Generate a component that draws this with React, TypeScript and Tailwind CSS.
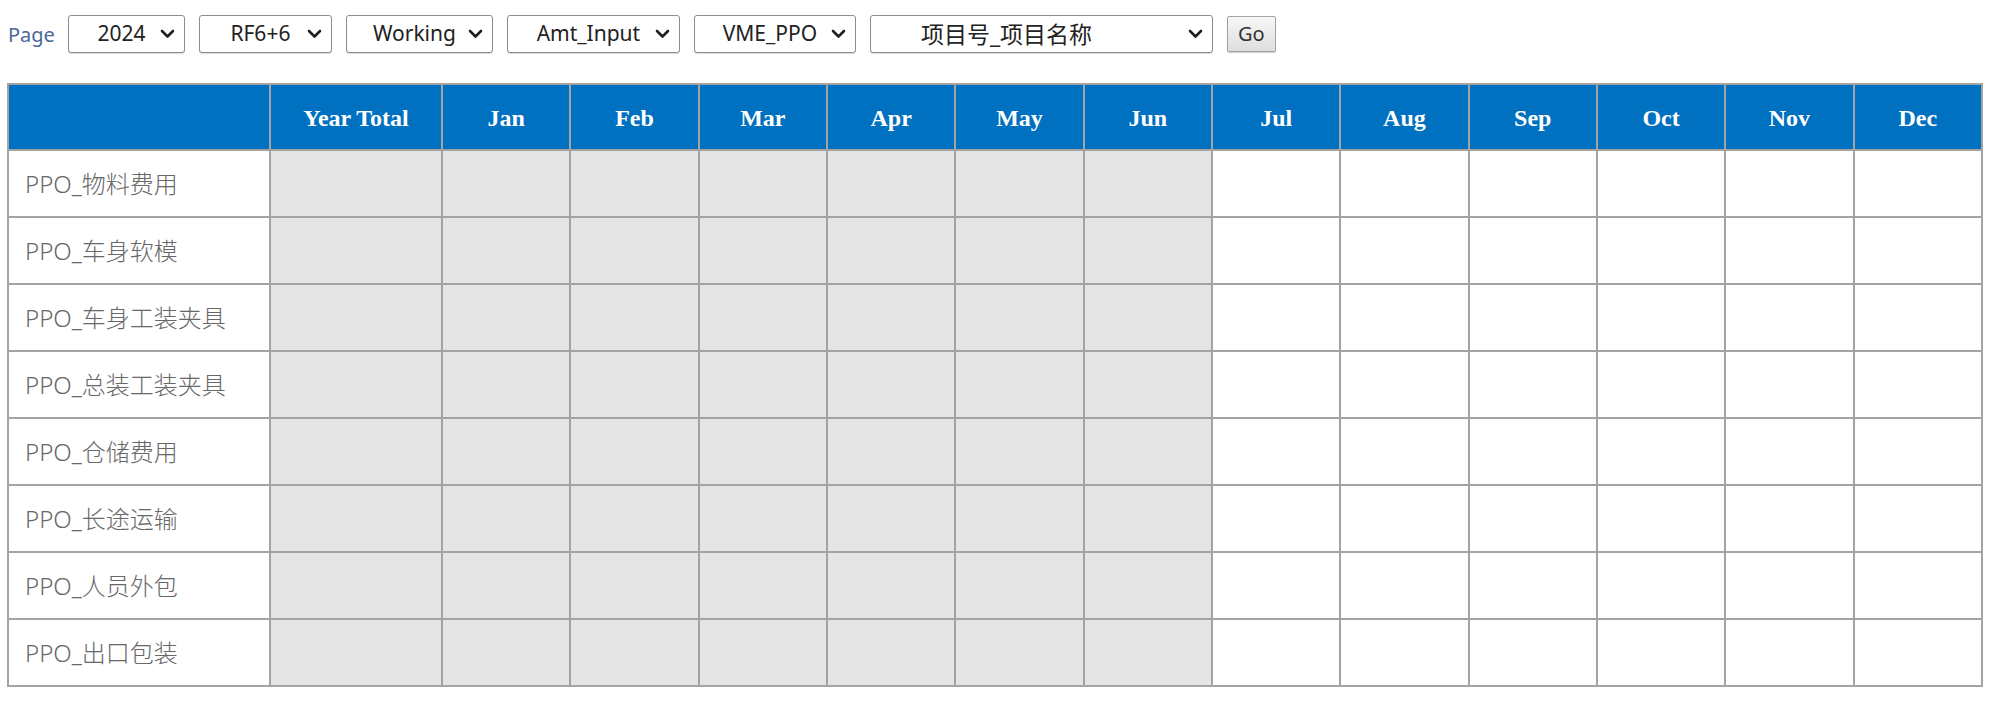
import React from "react";

const months = ["Jan","Feb","Mar","Apr","May","Jun","Jul","Aug","Sep","Oct","Nov","Dec"];
const labels = [
  "PPO_物料费用",
  "PPO_车身软模",
  "PPO_车身工装夹具",
  "PPO_总装工装夹具",
  "PPO_仓储费用",
  "PPO_长途运输",
  "PPO_人员外包",
  "PPO_出口包装",
];

function Chevron() {
  return (
    <svg width="15" height="10" viewBox="0 0 15 10" className="shrink-0">
      <polyline points="2,2 7.5,7.5 13,2" fill="none" stroke="#1f1f1f" strokeWidth="2.6" strokeLinecap="round" strokeLinejoin="round" />
    </svg>
  );
}

function FakeSelect({ text, w, left }: { text: string; w: string; left?: boolean }) {
  return (
    <div className={`${w} h-[38px] flex items-center border border-[#8c8c8c] rounded-[3px] bg-white shadow-[0_1px_1px_rgba(0,0,0,0.15)] pr-[9px] ${left ? "pl-[50px]" : "pl-[20px]"}`}>
      {left ? (
        <span className="flex-1 text-left text-[23px] text-[#222]">{text}</span>
      ) : (
        <span className="flex-1 text-center text-[21px] text-[#222] pr-[6px] whitespace-nowrap">{text}</span>
      )}
      <Chevron />
    </div>
  );
}

export default function App() {
  return (
    <div className="bg-white w-[1999px] h-[710px] pt-[15px] font-['Noto_Sans','Noto_Sans_CJK_SC',sans-serif]">
      <div className="flex items-center h-[38px] pl-[8px]">
        <span className="text-[20px] text-[#4a6a9a] mr-[13px] mt-[2px]">Page</span>
        <div className="flex items-center gap-[14px]">
          <FakeSelect text="2024" w="w-[117px]" />
          <FakeSelect text="RF6+6" w="w-[133px]" />
          <FakeSelect text="Working" w="w-[147px]" />
          <FakeSelect text="Amt_Input" w="w-[173px]" />
          <FakeSelect text="VME_PPO" w="w-[162px]" />
          <FakeSelect text="项目号_项目名称" w="w-[343px]" left />
          <button className="w-[49px] h-[36px] border border-[#a3a3a3] rounded-[2px] bg-gradient-to-b from-[#f7f7f7] to-[#dedede] text-[20px] text-[#333] leading-none shadow-[0_1px_1px_rgba(0,0,0,0.2)]">
            Go
          </button>
        </div>
      </div>
      <table className="table-fixed border-collapse ml-[7px] mt-[30px] w-[1976px]">
        <colgroup>
          <col className="w-[262px]" />
          <col className="w-[172px]" />
          {months.map((m) => (
            <col key={m} />
          ))}
        </colgroup>
        <thead>
          <tr className="h-[66px]">
            <th className="bg-[#0070c0] border-2 border-[#a3a3a3]"></th>
            <th className="bg-[#0070c0] border-2 border-[#a3a3a3] text-white font-bold text-[24px] font-['Liberation_Serif',serif] pt-[2px]">Year Total</th>
            {months.map((m) => (
              <th key={m} className="bg-[#0070c0] border-2 border-[#a3a3a3] text-white font-bold text-[24px] font-['Liberation_Serif',serif] pt-[2px]">{m}</th>
            ))}
          </tr>
        </thead>
        <tbody>
          {labels.map((l) => (
            <tr key={l} className="h-[67px]">
              <td className="border-2 border-[#a3a3a3] pl-[16px] text-[24px] font-light text-[#686868] whitespace-nowrap">{l}</td>
              {Array.from({ length: 13 }).map((_, i) => (
                <td key={i} className={`border-2 border-[#a3a3a3] ${i < 7 ? "bg-[#e5e5e5]" : "bg-white"}`}></td>
              ))}
            </tr>
          ))}
        </tbody>
      </table>
    </div>
  );
}
